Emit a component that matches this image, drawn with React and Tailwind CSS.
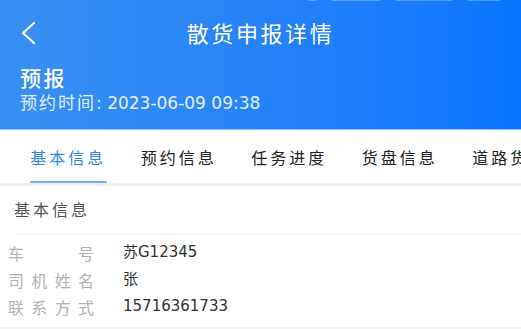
import React, { useState } from "react";

const tabs = ["基本信息", "预约信息", "任务进度", "货盘信息", "道路货运"];

const rows = [
  { label: ["车", "号"], value: "苏G12345" },
  { label: ["司", "机", "姓", "名"], value: "张" },
  { label: ["联", "系", "方", "式"], value: "15716361733" },
];

const latin = { fontFamily: '"DejaVu Sans", "Noto Sans CJK SC", sans-serif' };

function App() {
  const [active, setActive] = useState(0);

  return (
    <div
      className="w-[521px] h-[329px] overflow-hidden bg-white"
      style={{ fontFamily: '"Noto Sans CJK SC", "Noto Sans", sans-serif' }}
    >
      {/* header */}
      <div className="relative h-[130px] bg-gradient-to-r from-[#3a8ff2] to-[#0875ff] text-white border-b border-[#8cc0fa]">
        <div className="absolute top-0 left-[308px] flex gap-4 opacity-25">
          <span className="w-2 h-[1px] rounded-full bg-white" />
          <span className="w-12 h-[1px] rounded-full bg-white" />
          <span className="w-14 h-[1px] rounded-full bg-white" />
          <span className="w-8 h-[1px] rounded-full bg-white" />
        </div>
        <div className="relative flex items-center justify-center h-[64px]">
          <svg
            className="absolute left-[19px] top-[21px]"
            width="20"
            height="24"
            viewBox="0 0 20 24"
            fill="none"
          >
            <path d="M15 2 L4 12 L15 22" stroke="white" strokeWidth="2.2" strokeLinecap="round" strokeLinejoin="round" />
          </svg>
          <span className="text-[22px] tracking-[2.6px] leading-none">散货申报详情</span>
        </div>
        <div className="pl-[20px]">
          <div className="text-[21px] leading-[26px] tracking-[2.6px] font-medium">预报</div>
          <div className="flex items-baseline text-[17px] leading-[24px] text-white/85 whitespace-nowrap">
            <span className="tracking-[2px]">预约时间</span>
            <span style={latin}>: 2023-06-09 09:38</span>
          </div>
        </div>
      </div>

      {/* tabs */}
      <div className="flex h-[56px] pl-[13px] border-b-[3px] border-[#f0f0f0] whitespace-nowrap overflow-hidden">
        {tabs.map((t, i) => (
          <button
            key={t}
            onClick={() => setActive(i)}
            className={
              "relative w-[110.5px] shrink-0 flex items-start justify-center pt-[15px] text-[16px] leading-[24px] tracking-[3px] " +
              (i === active ? "text-[#2f86ee]" : "text-[#222]")
            }
          >
            {t}
            {i === active && (
              <span className="absolute left-[17px] right-[17px] bottom-0 h-[2px] rounded-full bg-[#72aef2]" />
            )}
          </button>
        ))}
      </div>

      {/* section */}
      <div className="pl-[14px] pt-[12px] h-[48px] text-[16px] leading-[22px] tracking-[3px] text-[#555]">
        基本信息
      </div>
      <div className="ml-[14px] border-t border-[#efefef]" />
      <div className="pt-[4px] pb-[7px]">
        {rows.map((r) => (
          <div key={r.value} className="flex items-center h-[27px]">
            <div className="w-[86px] ml-[8px] flex justify-between text-[16px] text-[#b2b2b2] leading-none">
              {r.label.map((c, i) => (
                <span key={i}>{c}</span>
              ))}
            </div>
            <div className="ml-[29px] text-[15px] text-[#333] leading-none" style={latin}>
              {r.value}
            </div>
          </div>
        ))}
      </div>
      <div className="border-t-[3px] border-[#f2f2f2]" />
    </div>
  );
}

export default App;
